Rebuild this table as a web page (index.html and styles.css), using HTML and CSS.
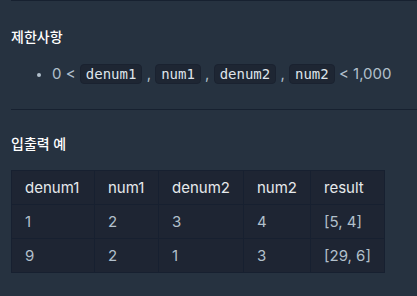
FILE: index.html
```html
<!DOCTYPE html>
<html lang="ko">
<head>
<meta charset="utf-8">
<link rel="stylesheet" href="styles.css">
</head>
<body>
<div class="page">
  <section class="section first">
    <h5 class="title">제한사항</h5>
    <ul class="list">
      <li>0 &lt; <code>denum1</code> , <code>num1</code> , <code>denum2</code> , <code>num2</code> &lt; 1,000</li>
    </ul>
  </section>
  <section class="section">
    <h5 class="title second">입출력 예</h5>
    <table class="table">
      <thead>
        <tr><th class="c1">denum1</th><th class="c2">num1</th><th class="c3">denum2</th><th class="c4">num2</th><th class="c5">result</th></tr>
      </thead>
      <tbody>
        <tr><td>1</td><td>2</td><td>3</td><td>4</td><td>[5, 4]</td></tr>
        <tr><td>9</td><td>2</td><td>1</td><td>3</td><td>[29, 6]</td></tr>
      </tbody>
    </table>
  </section>
</div>
</body>
</html>
```

FILE: styles.css
```css
html, body {
  margin: 0;
  padding: 0;
  background: #263240;
}
body {
  font-family: Inter, "Noto Sans CJK KR", sans-serif;
  color: #b2c0cc;
}
.page {
  padding-left: 11px;
}
.section {
  border-top: 1px solid #172130;
}
.first {
  height: 108px;
}
.title {
  margin: 0;
  padding-top: 28px;
  font-size: 14px;
  line-height: 16px;
  font-weight: 500;
  color: #ffffff;
}
.second {
  padding-top: 26px;
}
.list {
  margin: 0;
  padding: 18px 0 0 41px;
  font-size: 15px;
  line-height: 22px;
}
.list li::marker {
  font-size: 13px;
}
code {
  display: inline-block;
  font-family: "DejaVu Sans Mono", monospace;
  font-size: 14px;
  line-height: 18px;
  color: #dfe4ea;
  background: #1e2633;
  border: 1px solid #1a2230;
  border-radius: 4px;
  padding: 0 5px;
}
.table {
  margin-top: 18px;
  border-collapse: collapse;
  background: #1e2533;
  font-size: 15px;
}
.table th, .table td {
  border: 1px solid #172030;
  height: 33px;
  padding: 0 13px;
  text-align: left;
  font-weight: 400;
  white-space: nowrap;
}
.table th {
  color: #e6e9ec;
}
.c1 { width: 56px; }
.c2 { width: 37px; }
.c3 { width: 58px; }
.c4 { width: 40px; }
.c5 { width: 47px; }
```
